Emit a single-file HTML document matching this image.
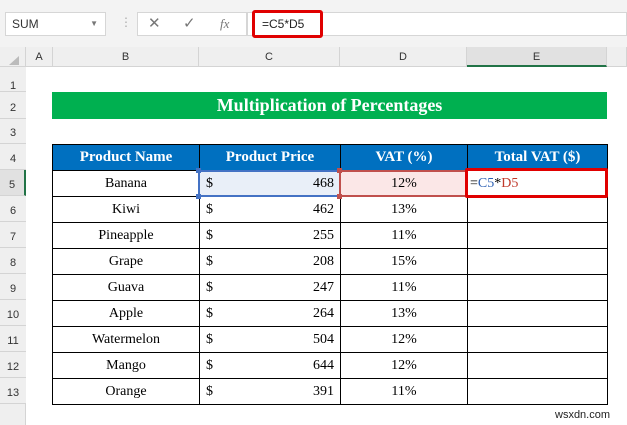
<!DOCTYPE html>
<html><head><style>
*{margin:0;padding:0;box-sizing:border-box}
body{width:627px;height:425px;background:#fff;position:relative;overflow:hidden;font-family:"Liberation Serif",serif}
.a{position:absolute}
.ui{font-family:"Liberation Sans",sans-serif}
.rh{position:absolute;left:0;width:22px;text-align:center;font-family:"Liberation Sans",sans-serif;font-size:11px;color:#333;border-bottom:1px solid #d4d4d4;background:#efefef}
.ch{position:absolute;top:47px;height:20px;line-height:20px;text-align:center;font-family:"Liberation Sans",sans-serif;font-size:11px;color:#333;border-right:1px solid #d4d4d4;background:#efefef;border-bottom:1px solid #d4d4d4}
table{position:absolute;left:52px;top:144px;border-collapse:collapse;font-size:14px}
td{border:1px solid #000;height:26px;padding:0 6px;text-align:center}
th{border:1px solid #000;background:#0070c0;color:#fff;font-size:15px;height:26px}
</style></head><body>
<div class="a" style="left:0;top:0;width:627px;height:47px;background:#f3f3f3"></div>
<div class="a ui" style="left:5px;top:12px;width:101px;height:24px;background:#fff;border:1px solid #d6d6d6;font-size:12px;line-height:22px;padding-left:6px;color:#333">SUM<span style="position:absolute;right:7px;font-size:8px;color:#777">▼</span></div>
<div class="a ui" style="left:120px;top:15px;color:#aaa;font-size:12px">⋮</div>
<div class="a ui" style="left:137px;top:12px;width:110px;height:24px;background:#fff;border:1px solid #d6d6d6;font-size:15px;line-height:22px;color:#777"><span class="a" style="left:10px">✕</span><span class="a" style="left:45px">✓</span><span class="a" style="left:82px;font-family:'Liberation Serif',serif;font-style:italic;font-size:13px">fx</span></div>
<div class="a" style="left:247px;top:12px;width:380px;height:24px;background:#fff;border:1px solid #d6d6d6"></div>
<div class="a ui" style="left:252px;top:10px;width:71px;height:28px;border:3px solid #e00000;border-radius:3px;font-size:12px;line-height:22px;padding-left:7px;color:#222">=C5*D5</div>
<div class="a" style="left:0;top:47px;width:26px;height:20px;background:#efefef;border-right:1px solid #d4d4d4;border-bottom:1px solid #d4d4d4"></div>
<div class="a" style="left:9px;top:56px;width:0;height:0;border-left:10px solid transparent;border-bottom:9px solid #bbb"></div>
<div class="ch" style="left:26px;width:27px">A</div>
<div class="ch" style="left:53px;width:146px">B</div>
<div class="ch" style="left:199px;width:141px">C</div>
<div class="ch" style="left:340px;width:127px">D</div>
<div class="ch" style="left:467px;width:140px;background:#e1e1e1;border-bottom:2px solid #217346">E</div>
<div class="ch" style="left:607px;width:20px"></div>
<div class="a" style="left:0;top:67px;width:26px;height:358px;background:#efefef;border-right:1px solid #d4d4d4"></div>
<div class="rh" style="top:67px;height:25px;line-height:38px;width:26px">1</div>
<div class="rh" style="top:92px;height:27px;line-height:33px;width:26px">2</div>
<div class="rh" style="top:119px;height:25px;line-height:29px;width:26px">3</div>
<div class="rh" style="top:144px;height:26px;line-height:30px;width:26px">4</div>
<div class="rh" style="top:170px;height:26px;line-height:30px;width:26px;background:#e1e1e1;border-right:2px solid #217346">5</div>
<div class="rh" style="top:196px;height:26px;line-height:30px;width:26px">6</div>
<div class="rh" style="top:222px;height:26px;line-height:30px;width:26px">7</div>
<div class="rh" style="top:248px;height:26px;line-height:30px;width:26px">8</div>
<div class="rh" style="top:274px;height:26px;line-height:30px;width:26px">9</div>
<div class="rh" style="top:300px;height:26px;line-height:30px;width:26px">10</div>
<div class="rh" style="top:326px;height:26px;line-height:30px;width:26px">11</div>
<div class="rh" style="top:352px;height:26px;line-height:30px;width:26px">12</div>
<div class="rh" style="top:378px;height:26px;line-height:30px;width:26px">13</div>
<div class="a" style="left:52px;top:92px;width:555px;height:27px;background:#00b050;color:#fff;font-weight:bold;font-size:18px;text-align:center;line-height:27px">Multiplication of Percentages</div>
<table>
<colgroup><col style="width:147px"><col style="width:141px"><col style="width:127px"><col style="width:140px"></colgroup>
<tr><th>Product Name</th><th>Product Price</th><th>VAT (%)</th><th>Total VAT ($)</th></tr>
<tr><td>Banana</td><td style="background:#e9eff8;text-align:right;position:relative"><span style="float:left">$</span>468</td><td style="background:#fbe7e7">12%</td><td style="text-align:left;padding-left:2px">=<span style="color:#2b5fb4">C5</span>*<span style="color:#c0392b">D5</span></td></tr>
<tr><td>Kiwi</td><td style="text-align:right"><span style="float:left">$</span>462</td><td>13%</td><td></td></tr>
<tr><td>Pineapple</td><td style="text-align:right"><span style="float:left">$</span>255</td><td>11%</td><td></td></tr>
<tr><td>Grape</td><td style="text-align:right"><span style="float:left">$</span>208</td><td>15%</td><td></td></tr>
<tr><td>Guava</td><td style="text-align:right"><span style="float:left">$</span>247</td><td>11%</td><td></td></tr>
<tr><td>Apple</td><td style="text-align:right"><span style="float:left">$</span>264</td><td>13%</td><td></td></tr>
<tr><td>Watermelon</td><td style="text-align:right"><span style="float:left">$</span>504</td><td>12%</td><td></td></tr>
<tr><td>Mango</td><td style="text-align:right"><span style="float:left">$</span>644</td><td>12%</td><td></td></tr>
<tr><td>Orange</td><td style="text-align:right"><span style="float:left">$</span>391</td><td>11%</td><td></td></tr>
</table>
<div class="a" style="left:198px;top:170px;width:143px;height:27px;border:2px solid #4472c4"></div>
<div class="a" style="left:339px;top:170px;width:129px;height:27px;border:2px solid #c0504d"></div>
<div class="a" style="left:196px;top:168px;width:5px;height:5px;background:#4472c4"></div>
<div class="a" style="left:337px;top:168px;width:5px;height:5px;background:#c0504d"></div>
<div class="a" style="left:196px;top:194px;width:5px;height:5px;background:#4472c4"></div>
<div class="a" style="left:337px;top:194px;width:5px;height:5px;background:#c0504d"></div>
<div class="a" style="left:465px;top:168px;width:143px;height:30px;border:3px solid #e00000;border-radius:2px"></div>
<div class="a ui" style="left:555px;top:409px;font-size:11px;color:#222">wsxdn.com</div>
</body></html>
